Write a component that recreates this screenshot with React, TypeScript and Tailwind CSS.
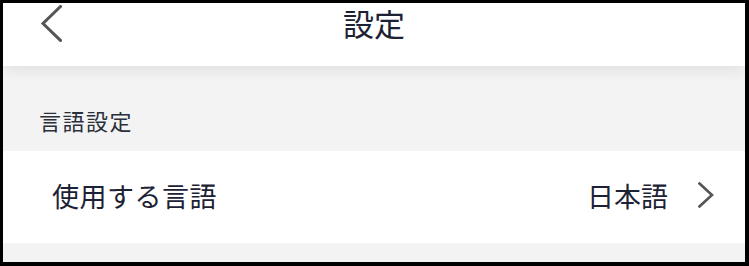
export default function App() {
  return (
    <div
      className="w-[749px] h-[266px] bg-black pt-[3px] pl-[3px] pr-[4px] pb-[4px]"
      style={{ fontFamily: '"Noto Sans CJK JP", "Noto Sans", sans-serif' }}
    >
      <div className="flex h-full flex-col bg-[#f3f3f3]">
        {/* header */}
        <div className="relative z-10 grid h-[63px] shrink-0 grid-cols-[1fr_auto_1fr] items-start bg-white shadow-[0_3px_14px_rgba(0,0,0,0.09)]">
          <div className="pl-[37px] pt-[2px]">
            <svg width="22" height="37" viewBox="0 0 22 37" fill="none">
              <path d="M20.5 1.5 L3 18.5 L20.5 35.5" stroke="#555555" strokeWidth="3" strokeLinecap="square" strokeLinejoin="miter" />
            </svg>
          </div>
          <div className="flex h-[38px] items-center pt-[2px] text-[31px] leading-[36px] text-[#1c2233]">設定</div>
          <div />
        </div>

        {/* section label */}
        <div className="flex h-[85px] shrink-0 items-end pb-[20px] pl-[36px] text-[22px] leading-none tracking-[1.5px] text-[#2a2f3a]">
          言語設定
        </div>

        {/* row */}
        <div className="flex h-[92px] shrink-0 items-center justify-between bg-white pb-[4px] pl-[49px] pr-[31px]">
          <span className="text-[27px] leading-none tracking-[0.5px] text-[#1c2233]">使用する言語</span>
          <div className="flex items-center gap-[30px]">
            <span className="text-[27px] leading-none text-[#1c2233]">日本語</span>
            <svg width="16" height="26" viewBox="0 0 16 26" fill="none">
              <path d="M1.5 1.5 L14 13 L1.5 24.5" stroke="#555555" strokeWidth="2.6" strokeLinecap="square" strokeLinejoin="miter" />
            </svg>
          </div>
        </div>

        <div className="flex-1" />
      </div>
    </div>
  );
}
